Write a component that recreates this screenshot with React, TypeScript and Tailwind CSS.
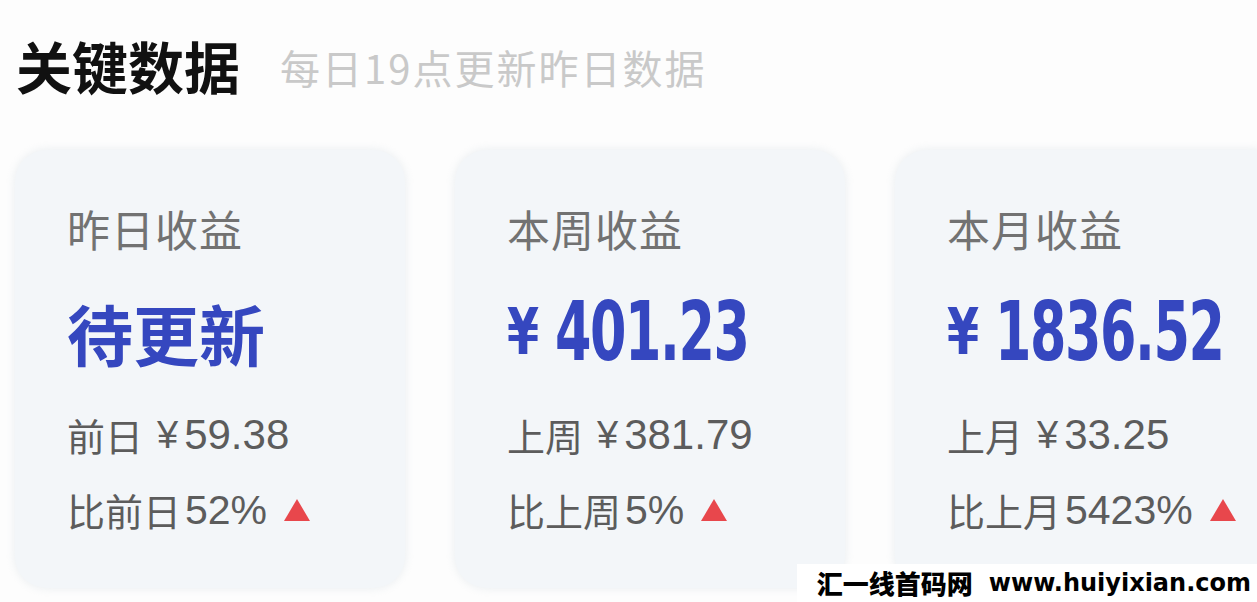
import React from "react";

type Card = {
  label: string;
  value: string;
  isNum: boolean;
  prevLabel: string;
  prevValue: string;
  cmpLabel: string;
  cmpValue: string;
};

const cards: Card[] = [
  { label: "昨日收益", value: "待更新", isNum: false, prevLabel: "前日", prevValue: "59.38", cmpLabel: "比前日", cmpValue: "52%" },
  { label: "本周收益", value: "401.23", isNum: true, prevLabel: "上周", prevValue: "381.79", cmpLabel: "比上周", cmpValue: "5%" },
  { label: "本月收益", value: "1836.52", isNum: true, prevLabel: "上月", prevValue: "33.25", cmpLabel: "比上月", cmpValue: "5423%" },
];

function StatCard({ c }: { c: Card }) {
  return (
    <div className="shrink-0 w-[390px] h-[438px] rounded-[32px] bg-[#f3f6f9] shadow-[0_0_10px_rgba(220,226,232,0.6)] pl-[52px] pt-[54px] flex flex-col font-['Noto_Sans_CJK_SC','Noto_Sans',sans-serif]">
      <div className="text-[43px] leading-[48px] tracking-[1px] text-[#727272]">{c.label}</div>
      {c.isNum ? (
        <div className="mt-[44px] h-[72px] flex items-center whitespace-nowrap text-[#3547bf] font-bold font-['DejaVu_Sans_Condensed','Liberation_Sans',sans-serif]">
          <span className="inline-block text-[64px] leading-none origin-left scale-x-[0.8] mr-[8px]">¥</span>
          <span className="inline-block text-[82px] leading-none tracking-[-2px] origin-left scale-x-[0.71]">{c.value}</span>
        </div>
      ) : (
        <div className="mt-[44px] text-[66px] leading-[72px] font-bold text-[#3547bf]">{c.value}</div>
      )}
      <div className="mt-[45px] h-[44px] text-[#5c5c5c] flex items-center whitespace-nowrap">
        <span className="text-[38px] leading-[44px]">{c.prevLabel}</span>
        <span className="ml-[14px] text-[38px] leading-[44px] font-['Liberation_Sans','Noto_Sans_CJK_SC',sans-serif]">¥</span>
        <span className="ml-[6px] text-[42px] leading-[44px] font-['Liberation_Sans',sans-serif]">{c.prevValue}</span>
      </div>
      <div className="mt-[31px] h-[44px] text-[#5c5c5c] flex items-center whitespace-nowrap">
        <span className="text-[38px] leading-[44px]">{c.cmpLabel}</span>
        <span className="ml-[4px] text-[41px] leading-[44px] font-['Liberation_Sans',sans-serif]">{c.cmpValue}</span>
        <svg className="ml-[17px]" width="26" height="22" viewBox="0 0 26 22">
          <polygon points="13,0 26,22 0,22" fill="#e8474c" />
        </svg>
      </div>
    </div>
  );
}

export default function App() {
  return (
    <div className="relative w-[1257px] h-[602px] overflow-hidden bg-[#fdfdfd] font-['Noto_Sans_CJK_SC','Noto_Sans',sans-serif]">
      <div className="flex items-end pl-[16px] pt-[34px]">
        <div className="text-[56px] leading-[62px] font-bold text-[#111]">关键数据</div>
        <div className="ml-[40px] mb-[4px] text-[40px] leading-[50px] tracking-[2px] text-[#c9c9c9]">每日19点更新昨日数据</div>
      </div>
      <div className="flex gap-[50px] pl-[15px] mt-[54px]">
        {cards.map((c) => (
          <StatCard key={c.label} c={c} />
        ))}
      </div>
      <div className="absolute right-0 bottom-0 w-[460px] h-[38px] bg-white flex items-center justify-end pr-[6px] whitespace-nowrap">
        <span className="shrink-0 text-[26px] leading-none font-black text-black">汇一线首码网</span>
        <span className="shrink-0 ml-[16px] text-[24px] leading-none font-bold text-black font-['DejaVu_Sans',sans-serif]">www.huiyixian.com</span>
      </div>
    </div>
  );
}
